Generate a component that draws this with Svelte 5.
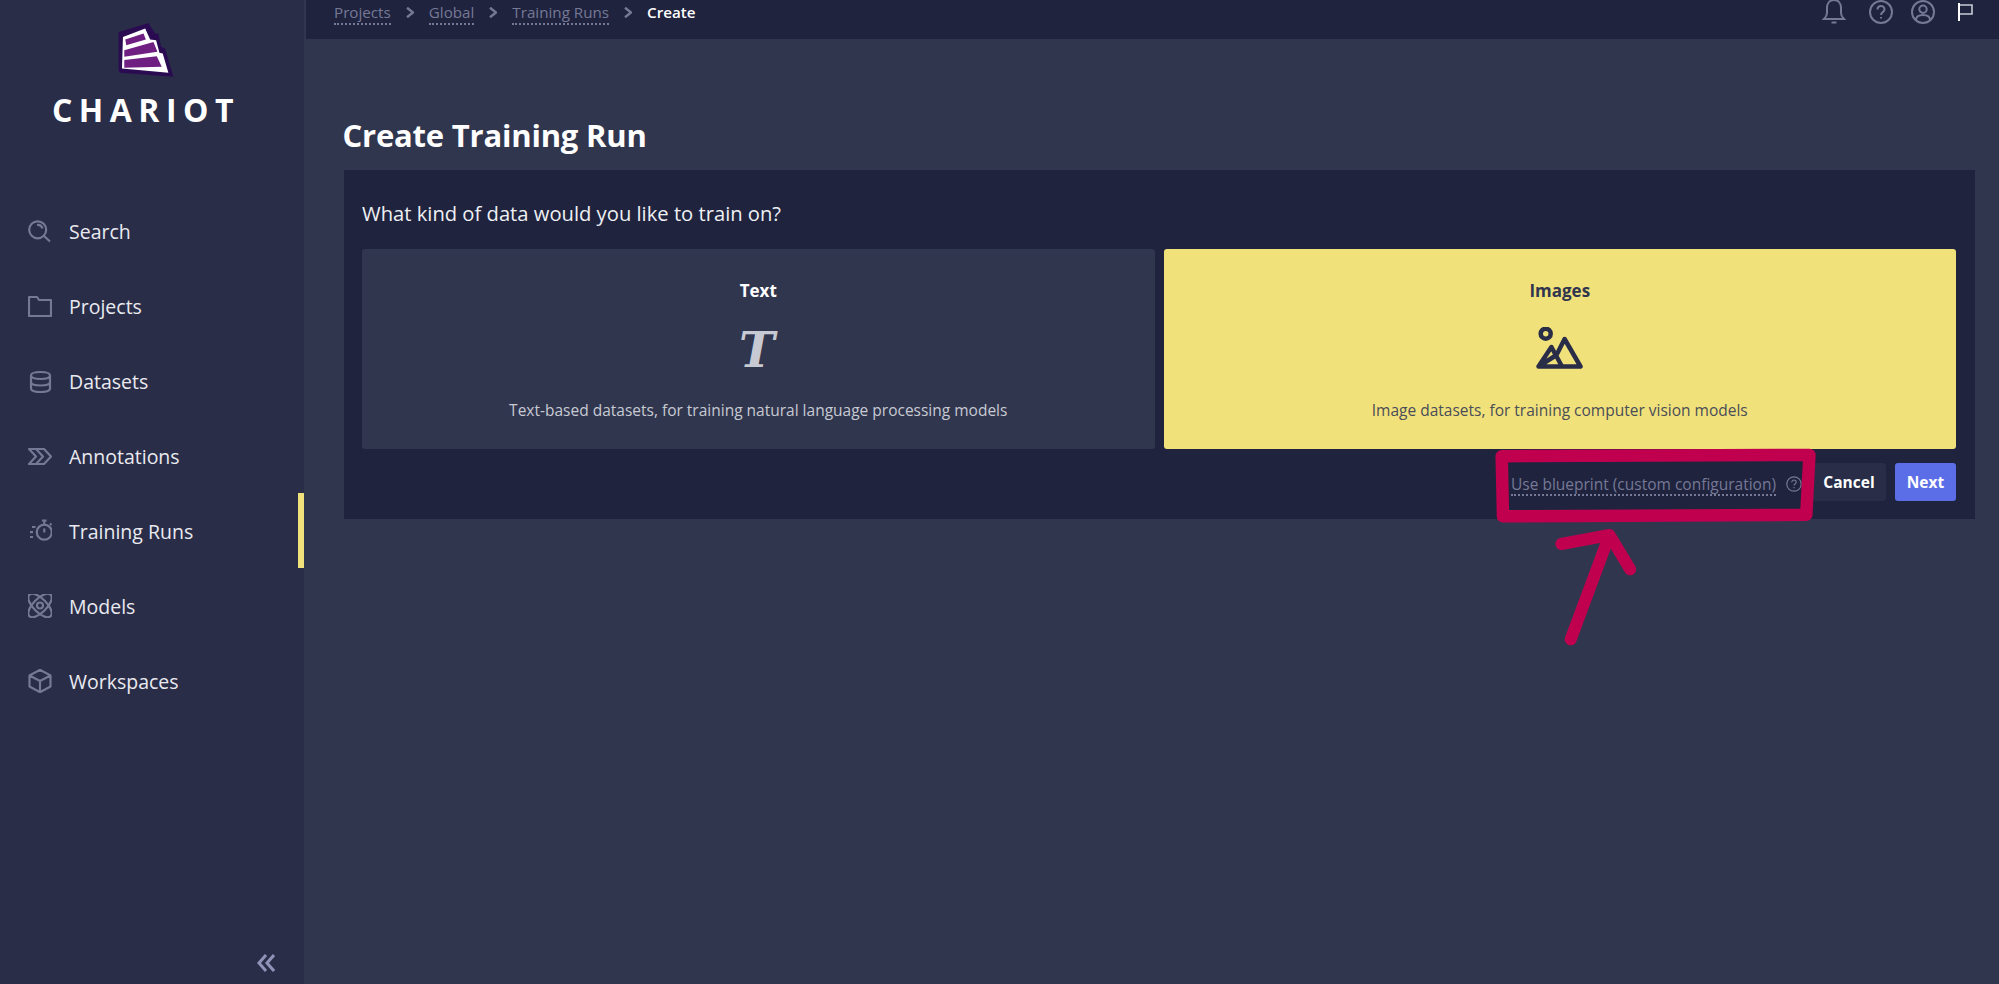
<script>
  const navItems = [
    { label: 'Search', d: 'M9.7 2.3a8.5 8.5 0 1 0 0 17a8.5 8.5 0 0 0 0-17z M16 17l6 5.5 M9 6a5 5 0 0 1 5.5 3.5' },
    { label: 'Projects', d: 'M1 22V3h8l2 3h12v16z' },
    { label: 'Datasets', d: 'M3 6.5c0-2.2 4.2-3.5 9.5-3.5s9.5 1.3 9.5 3.5-4.2 3.5-9.5 3.5-9.5-1.3-9.5-3.5z M3 6.5v13c0 2.2 4.2 3.5 9.5 3.5s9.5-1.3 9.5-3.5v-13 M3 13c0 2.2 4.2 3.5 9.5 3.5s9.5-1.3 9.5-3.5' },
    { label: 'Annotations', d: 'M1 5h15l7 7.5-7 7.5H1l7-7.5z M8 5l7 7.5-7 7.5' },
    { label: 'Training Runs', d: 'M16.3 5.7a7.5 7.5 0 1 0 0 15a7.5 7.5 0 0 0 0-15z M16.3 2v3.7 M14 1.5h4.6 M22 4.5l1.5 1.5 M16.3 9.5v4 M4 8h3.5 M2 13.2h3 M2 18h3' },
    { label: 'Models', d: 'M1.4 .9A15 6.5 45 1 0 22.6 22.1A15 6.5 45 1 0 1.4 .9z M22.6 .9A15 6.5 -45 1 0 1.4 22.1A15 6.5 -45 1 0 22.6 .9z M12 8.5a3 3 0 1 0 0 6a3 3 0 1 0 0-6z' },
    { label: 'Workspaces', d: 'M12 .8L22.5 6.5V17.5L12 23.2L1.5 17.5V6.5z M1.5 6.5L12 12l10.5-5.5 M12 12v11' }
  ];
  const crumbs = ['Projects', 'Global', 'Training Runs'];
  const active = 'Training Runs';
</script>

<div class="app">
  <aside class="sidebar">
    <div class="brand">
      <svg class="logo" viewBox="350 62 175 172" aria-hidden="true">
        <path fill="#2a0b52" d="M355 95L445 68L465 100L475 100L483 140L495 145L520 230L358 218L355 210z" />
        <path fill="#fff" d="M368 110L435 85L450 118L468 120L478 158L488 160L505 218L365 205z" />
        <path fill="#6f1f82" d="M375 118L430 100L437 118L378 135z M372 150L460 125L472 155L372 170z M372 180L470 168L485 200L372 203z" />
      </svg>
      <div class="wordmark">CHARIOT</div>
    </div>

    <nav class="nav">
      {#each navItems as item}
        <a class="nav-item" class:active={item.label === active} href="#/">
          <svg class="nav-icon" viewBox="0 0 24 24" aria-hidden="true"><path d={item.d} /></svg>
          <span>{item.label}</span>
        </a>
      {/each}
    </nav>

    <button class="collapse" aria-label="Collapse">
      <svg viewBox="0 0 18 18" aria-hidden="true"><path d="M9 1L2 9l7 8 M17 1L10 9l7 8" /></svg>
    </button>
  </aside>

  <main class="main">
    <header class="topbar">
      <div class="crumbs">
        {#each crumbs as c}
          <a href="#/">{c}</a>
          <svg class="chev" viewBox="0 0 8 11" aria-hidden="true"><path d="M1 .7L7 5.5L1 10.3" /></svg>
        {/each}
        <span class="current">Create</span>
      </div>
      <div class="top-icons">
        <svg class="bell" viewBox="0 0 24 24" aria-hidden="true"><path d="M12 0c-4.5 0-7 3.5-7 8v5c0 3-1.500 4.500-3 6h20c-1.500-1.500-3-3-3-6V8c0-4.500-2.500-8-7-8z M9.500 22.500h5" /></svg>
        <svg viewBox="0 0 24 24" aria-hidden="true"><path d="M12 1a11 11 0 1 0 0 22a11 11 0 0 0 0-22z M8.500 9.500c0-2 1.500-3.500 3.500-3.500s3.500 1.500 3.500 3.300c0 3-3.500 2.700-3.500 5.700 M12 17v1.600" /></svg>
        <svg viewBox="0 0 24 24" aria-hidden="true"><path d="M12 1a11 11 0 1 0 0 22a11 11 0 0 0 0-22z M12 5.500a3.700 3.700 0 1 0 0 7.400a3.700 3.700 0 0 0 0-7.400z M5 20c0-3.500 3-5 7-5s7 1.500 7 5" /></svg>
        <svg class="flag" viewBox="0 0 24 24" aria-hidden="true"><path class="cloth" d="M6 5h13v9H6" /><path d="M6 3v17 M5 20h2" /></svg>
      </div>
    </header>

    <div class="content">
      <h1>Create Training Run</h1>
      <section class="card">
        <p class="question">What kind of data would you like to train on?</p>
        <div class="choices">
          <button class="choice">
            <strong>Text</strong>
            <span class="t-glyph">T</span>
            <span class="desc">Text-based datasets, for training natural language processing models</span>
          </button>
          <button class="choice selected">
            <strong>Images</strong>
            <svg class="img-icon" viewBox="0 0 47 42" aria-hidden="true">
              <path d="M9.700 1.700a5 5 0 1 0 0 10a5 5 0 0 0 0-10z M2.500 39.500L15.400 20L26 39.500 M20.500 28L28.600 12L44.500 39.500H2.500z" />
            </svg>
            <span class="desc">Image datasets, for training computer vision models</span>
          </button>
        </div>
        <div class="actions">
          <a class="blueprint" href="#/">Use blueprint (custom configuration)</a>
          <svg class="help" viewBox="0 0 16 16" aria-hidden="true"><path d="M8 .8a7.200 7.200 0 1 0 0 14.400a7.200 7.200 0 0 0 0-14.400z M5.800 6.200c0-1.300 1-2.200 2.200-2.200s2.200.9 2.200 2.100c0 1.900-2.200 1.700-2.200 3.500 M8 11v1.200" /></svg>
          <button class="btn cancel">Cancel</button>
          <button class="btn next">Next</button>
        </div>
      </section>
    </div>
  </main>

  <!-- hand-drawn annotation lying over the page -->
  <svg class="markup" viewBox="0 0 1999 984" aria-hidden="true">
    <path class="markup-line box" d="M1501.700 456.200L1809.400 455L1806.300 514.800L1503 516.300z" />
    <path class="markup-line" d="M1570.700 639.300L1609.500 535 M1561.400 544L1609.500 535L1630.200 569.300" />
  </svg>
</div>

<style>
  :global(body) {
    margin: 0;
    background: #31364f;
  }

  .app {
    position: relative;
    display: flex;
    min-height: 100vh;
    font-family: "Open Sans", "Noto Sans", sans-serif;
    color: #fff;
    overflow: hidden;
  }

  /* Sidebar */
  .sidebar {
    width: 304px;
    flex: none;
    display: flex;
    flex-direction: column;
    background: #292d47;
  }

  .brand {
    height: 193px;
    box-sizing: border-box;
    padding-top: 21px;
    display: flex;
    flex-direction: column;
    align-items: center;
  }

  .logo {
    width: 58px;
    height: 57px;
    margin-right: 13px;
  }

  .wordmark {
    margin-top: 16px;
    margin-right: 12px;
    font-size: 32px;
    line-height: 32px;
    font-weight: 700;
    letter-spacing: 6.5px;
  }

  .nav-item {
    height: 75px;
    display: flex;
    align-items: center;
    gap: 17px;
    padding-left: 28px;
    font-size: 19.5px;
    color: #e9eaf0;
    text-decoration: none;
  }

  .nav-item span {
    padding-top: 1px;
  }

  .nav-item.active {
    box-shadow: inset -6px 0 0 #f1e17b;
  }

  .nav-icon {
    width: 24px;
    height: 24px;
    fill: none;
    stroke: #757996;
    stroke-width: 2.2;
    stroke-linejoin: round;
  }

  .collapse {
    margin-top: auto;
    margin-left: 257px;
    margin-bottom: 12px;
    width: 18px;
    height: 18px;
    padding: 0;
    background: none;
    border: none;
  }

  .collapse svg {
    display: block;
    fill: none;
    stroke: #8f93b8;
    stroke-width: 3;
  }

  /* Main */
  .main {
    flex: 1;
    display: flex;
    flex-direction: column;
    min-width: 0;
  }

  .topbar {
    height: 39px;
    margin-left: 2px;
    padding: 0 22px 0 28px;
    display: flex;
    justify-content: space-between;
    align-items: flex-start;
    background: #1f233e;
  }

  .crumbs {
    display: flex;
    align-items: flex-start;
    gap: 15px;
    font-size: 15.2px;
    line-height: 21px;
    padding-top: 2px;
  }

  .crumbs a {
    color: #757996;
    text-decoration: none;
    border-bottom: 2px dotted #757996;
  }

  .chev {
    width: 8px;
    height: 11px;
    margin-top: 5px;
    fill: none;
    stroke: #757996;
    stroke-width: 2.4;
  }

  .current {
    font-weight: 600;
    color: #fff;
  }

  .top-icons {
    display: flex;
    gap: 18px;
  }

  .top-icons svg {
    width: 24px;
    height: 24px;
    fill: none;
    stroke: #757996;
    stroke-width: 2;
  }

  .top-icons .bell {
    margin-right: 5px;
  }

  .top-icons .flag {
    stroke: #fff;
  }

  .top-icons .flag .cloth {
    stroke: #c9cbd6;
    stroke-width: 1.6;
  }

  .content {
    padding: 75px 24.5px 0 39.5px;
  }

  h1 {
    margin: 0 0 14px -1px;
    font-size: 31px;
    line-height: 42px;
    font-weight: 700;
    letter-spacing: -0.2px;
  }

  .card {
    padding: 18px 18.5px;
    background: #1f233e;
  }

  .question {
    margin: 12px 0 23px;
    font-size: 20.2px;
    line-height: 26px;
    color: #eef0f4;
  }

  .choices {
    display: grid;
    grid-template-columns: 1fr 1fr;
    gap: 9px;
  }

  .choice {
    height: 200px;
    padding: 30px 0 0;
    display: flex;
    flex-direction: column;
    align-items: center;
    background: #31364f;
    color: #fff;
    border: none;
    border-radius: 3px;
    font-family: inherit;
  }

  .choice strong {
    font-size: 17px;
    line-height: 24px;
    font-weight: 700;
  }

  .t-glyph {
    height: 42px;
    margin: 26px 3px 28px 0;
    font-family: "DejaVu Serif", serif;
    font-style: italic;
    font-weight: 700;
    font-size: 48px;
    line-height: 42px;
    color: #c7cad2;
  }

  .img-icon {
    width: 47px;
    height: 42px;
    margin: 24px 0 30px;
    fill: none;
    stroke: #292d47;
    stroke-width: 4.5;
    stroke-linejoin: round;
  }

  .desc {
    font-size: 15.5px;
    line-height: 22px;
    color: #c7cad2;
  }

  .choice.selected {
    background: #f1e17b;
    color: #31364f;
  }

  .choice.selected .desc {
    color: #4a4d57;
  }

  .actions {
    margin-top: 14px;
    display: flex;
    justify-content: flex-end;
    align-items: center;
  }

  .blueprint {
    margin-top: 6px;
    font-size: 15.5px;
    line-height: 20px;
    color: #757996;
    text-decoration: none;
    border-bottom: 2px dotted #757996;
  }

  .help {
    width: 16px;
    height: 16px;
    margin: 4px 10px 0;
    fill: none;
    stroke: #757996;
    stroke-width: 1.2;
  }

  .btn {
    height: 38px;
    border: none;
    border-radius: 3px;
    font-family: inherit;
    font-size: 15.5px;
    font-weight: 700;
    color: #fff;
  }

  .cancel {
    width: 74px;
    background: #292d47;
  }

  .next {
    width: 61px;
    margin-left: 9px;
    background: #5b6ee8;
  }

  .markup {
    position: absolute;
    top: 0;
    left: 0;
    width: 1999px;
    height: 984px;
    pointer-events: none;
  }

  .markup-line {
    fill: none;
    stroke: #c0004f;
    stroke-width: 12;
    stroke-linecap: round;
    stroke-linejoin: round;
  }

  .markup-line.box {
    stroke-width: 12.5;
  }
</style>
